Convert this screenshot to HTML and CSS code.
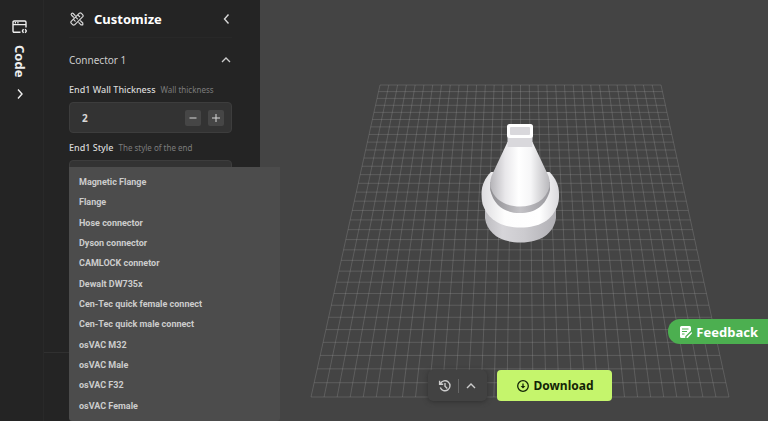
FILE: index.html
```html
<!DOCTYPE html>
<html lang="en">
<head>
<meta charset="utf-8">
<meta name="viewport" content="width=device-width, initial-scale=1">
<title>Customize</title>
<link rel="stylesheet" href="styles.css">
</head>
<body>
<div class="app">
  <nav class="rail">
    <button class="rail-tab" type="button">
      <svg class="icon-code" viewBox="0 0 16 14" fill="none" stroke="currentColor" stroke-width="1.4">
        <path d="M8.500 12.300H2.200Q1 12.300 1 11.100V2.200Q1 1 2.200 1H12.800Q14 1 14 2.200V7.500M1 4.600H14M2.800 2.800H4M5.300 2.800H6.500"/>
        <path d="M11.500 9.200L10.400 11L11.500 12.800M13.200 9.200L14.300 11L13.200 12.800"/>
      </svg>
      <span class="rail-label">Code</span>
      <svg class="chevron" viewBox="0 0 12 12" fill="none" stroke="currentColor" stroke-width="1.4"><path d="M4 1.500L8 6L4 10.500"/></svg>
    </button>
  </nav>

  <aside class="panel">
    <header class="panel-head">
      <svg class="icon-tools" viewBox="0 0 14 14" fill="none" stroke="currentColor" stroke-width="1.2" stroke-linejoin="round" stroke-linecap="round">
        <path d="M1.200 9.400L9.400 1.200Q10.300 .5 11.200 1.200L12.800 2.800Q13.500 3.700 12.800 4.600L4.600 12.800Q3.700 13.500 2.800 12.800L1.200 11.200Q.5 10.300 1.200 9.400ZM8.400 3.500L9.600 4.700M6.200 5.700L7.400 6.900M4 7.900L5.200 9.100"/>
        <path d="M3.600 5.200L1.500 3.200Q.8 2.400 1.500 1.600Q2.400 .9 3.200 1.500L5.200 3.600M10.400 8.800L12.800 11V12.800H11L8.800 10.600"/>
      </svg>
      <h1 class="panel-title">Customize</h1>
      <button class="icon-button" type="button" aria-label="Collapse panel">
        <svg class="chevron" viewBox="0 0 12 12" fill="none" stroke="currentColor" stroke-width="1.4"><path d="M8.500 1.500L4.500 6L8.500 10.500"/></svg>
      </button>
    </header>
    <button class="section-toggle" type="button" aria-expanded="true">
      <span>Connector 1</span>
      <svg class="chevron" viewBox="0 0 12 12" fill="none" stroke="currentColor" stroke-width="1.3"><path d="M2 8L6 4L10 8"/></svg>
    </button>
    <div class="field">
      <div class="field-head"><label for="wall">End1 Wall Thickness</label><span class="hint">Wall thickness</span></div>
      <div class="stepper">
        <input id="wall" class="stepper-value" type="text" inputmode="numeric" value="2">
        <button class="step" type="button" aria-label="Decrease"><svg viewBox="0 0 10 10" stroke="currentColor"><path d="M1.500 5H8.500"/></svg></button>
        <button class="step" type="button" aria-label="Increase"><svg viewBox="0 0 10 10" stroke="currentColor"><path d="M1 5H9M5 1V9"/></svg></button>
      </div>
    </div>
    <div class="field">
      <div class="field-head"><label for="style">End1 Style</label><span class="hint">The style of the end</span></div>
      <div class="select-wrap">
        <select id="style" class="select"></select>
        <ul class="menu" role="listbox" aria-labelledby="style">
          <li class="option" role="option">Magnetic Flange</li>
          <li class="option" role="option">Flange</li>
          <li class="option" role="option">Hose connector</li>
          <li class="option" role="option">Dyson connector</li>
          <li class="option" role="option">CAMLOCK connetor</li>
          <li class="option" role="option">Dewalt DW735x</li>
          <li class="option" role="option">Cen-Tec quick female connect</li>
          <li class="option" role="option">Cen-Tec quick male connect</li>
          <li class="option" role="option">osVAC M32</li>
          <li class="option" role="option">osVAC Male</li>
          <li class="option" role="option">osVAC F32</li>
          <li class="option" role="option">osVAC Female</li>
        </ul>
      </div>
    </div>
    <footer class="panel-foot"></footer>
  </aside>

  <main class="viewer">
    <svg class="scene" viewBox="260 0 508 421" role="img" aria-label="Model preview">
      <defs>
        <linearGradient id="side"><stop offset="0" stop-color="#bdbcc0"/><stop offset=".25" stop-color="#d6d5d9"/><stop offset=".55" stop-color="#cccbcf"/><stop offset="1" stop-color="#b0afb4"/></linearGradient>
        <linearGradient id="ring"><stop offset="0" stop-color="#dddcdf"/><stop offset=".3" stop-color="#fdfdfd"/><stop offset=".75" stop-color="#fff"/><stop offset="1" stop-color="#d9d8dc"/></linearGradient>
        <linearGradient id="cone"><stop offset="0" stop-color="#b4b3b7"/><stop offset=".25" stop-color="#e8e7ea"/><stop offset=".48" stop-color="#fff"/><stop offset=".68" stop-color="#f6f6f7"/><stop offset="1" stop-color="#b8b7bb"/></linearGradient>
        <linearGradient id="band"><stop offset="0" stop-color="#8e8d91"/><stop offset=".5" stop-color="#c4c3c7"/><stop offset="1" stop-color="#99989d"/></linearGradient>
      </defs>
      <path id="grid" class="grid"/>
      <path fill="url(#side)" d="M485 205V218C487 233 500 242.500 520.500 242.500S554 233 556 218V205Z"/>
      <path fill="url(#ring)" d="M481.500 194C481.500 185 485 178 491 172H549.500C555.500 178 559 185 559 194C559 198 559 200 558 204C553 220 540 227.500 520.500 227.500S488 220 482.500 204Q481.500 199 481.500 194Z"/>
      <path fill="url(#band)" d="M490.200 182V190C494 206 505 213 520 213S546 206 550 190V182Z"/>
      <path fill="url(#cone)" d="M507.500 142L491.500 176Q489.500 182 490.500 187C494 200 506 206.500 520 206.500S546 200 549.500 187Q550.500 182 548.500 176L532.500 142Z"/>
      <path fill="#d9d8dc" d="M507.500 136H532.500V147H507.500Z"/>
      <rect x="507" y="124" width="26" height="14" rx="2.500" fill="#fff"/>
      <rect x="510" y="127" width="20" height="8" rx="1" fill="#d9d8dc"/>
    </svg>
    <button class="feedback" type="button">
      <svg class="icon-note" viewBox="0 0 12 14">
        <path fill="currentColor" d="M1.500 1H9.500Q11 1 11 2.500V5.500L5.300 11.200V13H1.500Q0 13 0 11.500V2.500Q0 1 1.500 1ZM11.600 7L12 8.300L7.800 13H6.500V11.800Z"/>
        <path stroke="#4caf50" stroke-width="1.200" d="M2 4H8.500M2 6.500H7M2 9H4.500"/>
      </svg>
      <span>Feedback</span>
    </button>
    <div class="actions">
      <div class="history">
        <button class="icon-button" type="button" aria-label="History">
          <svg class="icon-history" viewBox="0 0 14 14" fill="none" stroke="currentColor" stroke-width="1.400"><path d="M2.500 4.600A5 5 0 1 1 2.300 8.500M1.600 1.800V5.300H5.200M7 4V7.300L9.300 9.400"/></svg>
        </button>
        <span class="divider"></span>
        <button class="icon-button" type="button" aria-label="More">
          <svg class="chevron" viewBox="0 0 12 12" fill="none" stroke="currentColor" stroke-width="1.400"><path d="M2 8L6 4L10 8"/></svg>
        </button>
      </div>
      <button class="download" type="button">
        <svg class="icon-download" viewBox="0 0 14 14" fill="none" stroke="currentColor" stroke-width="1.300"><circle cx="7" cy="7" r="5.300"/><path d="M7 4.500V8"/><path fill="currentColor" stroke="none" d="M4.600 7H9.400L7 9.600Z"/></svg>
        <span>Download</span>
      </button>
    </div>
  </main>
</div>
<script src="grid.js"></script>
</body>
</html>
```
FILE: styles.css
```css
* { box-sizing: border-box; }

body {
  margin: 0;
  background: #444;
  color: #d8d8d8;
  font-family: "Noto Sans", sans-serif;
  font-size: 10px;
}

button, input, select {
  margin: 0;
  padding: 0;
  border: 0;
  background: none;
  color: inherit;
  font: inherit;
}

svg { display: block; }

.app {
  display: flex;
  height: 100vh;
  overflow: hidden;
}

.rail {
  flex: 0 0 44px;
  background: #242424;
  border-right: 1px solid #292929;
}

.rail-tab {
  display: flex;
  flex-direction: column;
  align-items: center;
  gap: 11px;
  width: 100%;
  padding: 20px 4px 0 0;
  color: #eee;
}

.icon-code { width: 16px; height: 14px; }

.rail-label {
  writing-mode: vertical-rl;
  font-size: 13px;
  line-height: 16px;
  font-weight: 700;
}

.chevron { width: 12px; height: 12px; }

.panel {
  display: flex;
  flex-direction: column;
  flex: 0 0 216px;
  min-width: 0;
  padding: 0 28px 0 25px;
  background: #242424;
}

.panel-head {
  display: flex;
  align-items: center;
  height: 38px;
  border-bottom: 1px solid #282828;
}

.icon-tools { width: 14px; height: 14px; margin: 0 10px 0 1px; }

.panel-title {
  flex: 1;
  margin: 0;
  color: #fff;
  font-size: 13px;
  font-weight: 700;
}

.section-toggle {
  display: flex;
  align-items: center;
  justify-content: space-between;
  height: 44px;
  color: #ccc;
}

.field { margin-bottom: 7px; }

.field-head {
  display: flex;
  align-items: center;
  gap: 5px;
  height: 20px;
  padding-bottom: 5px;
  white-space: nowrap;
  font-size: 9px;
  font-weight: 500;
}

.hint { color: #7c7c7c; font-size: 8px; font-weight: 400; }

.stepper {
  display: flex;
  align-items: center;
  gap: 7px;
  height: 31px;
  padding: 0 7px 0 12px;
  border: 1px solid #3d3d3d;
  border-radius: 4px;
  background: #333;
}

.stepper-value {
  flex: 1;
  width: 100%;
  min-width: 0;
  font-size: 10px;
  font-weight: 700;
}

.step {
  display: grid;
  flex: none;
  place-items: center;
  width: 16px;
  height: 16px;
  border-radius: 2px;
  background: #464646;
}

.step svg { width: 10px; height: 10px; }

.select-wrap { position: relative; }

.select {
  display: block;
  width: 100%;
  height: 31px;
  appearance: none;
  border: 1px solid #3d3d3d;
  border-radius: 4px;
  background: #333;
}

.menu {
  position: absolute;
  top: 7px;
  left: 0;
  z-index: 2;
  width: 211px;
  margin: 0;
  padding: 5px 10px;
  list-style: none;
  border-radius: 0 0 3px 3px;
  background: #4c4c4c;
  color: #ccc;
  font-family: Roboto, sans-serif;
  font-size: 9px;
  font-weight: 700;
  white-space: nowrap;
}

.option {
  display: flex;
  align-items: center;
  min-height: 20px;
}

.option:nth-child(3n) { min-height: 21px; }

.panel-foot {
  height: 69px;
  margin: auto -28px 0 -25px;
  border-top: 1px solid #303030;
}

.viewer {
  position: relative;
  display: flex;
  flex: 1;
  min-width: 0;
}

.scene { width: 100%; height: 100%; }

.grid { fill: none; stroke: #a0a0a0; stroke-opacity: .28; }

.feedback {
  position: absolute;
  right: 0;
  bottom: 77px;
  display: flex;
  align-items: center;
  gap: 4px;
  height: 25px;
  padding: 0 10px 0 12px;
  border-radius: 12px 0 0 12px;
  background: #4caf50;
  color: #fff;
  font-size: 13px;
  font-weight: 700;
}

.icon-note { width: 12px; height: 14px; }

.actions {
  position: absolute;
  right: 0;
  bottom: 20px;
  left: 0;
  display: flex;
  justify-content: center;
  gap: 10px;
  padding-left: 12px;
}

.history {
  display: flex;
  align-items: center;
  gap: 6px;
  padding: 0 10px;
  border-radius: 5px;
  background: #424242;
  box-shadow: 0 1px 5px #303030;
  color: #ccc;
}

.divider { width: 1px; height: 14px; background: #666; }

.icon-history, .icon-download { width: 14px; height: 14px; }

.download {
  display: flex;
  align-items: center;
  gap: 4px;
  height: 31px;
  padding: 0 19px;
  border-radius: 4px;
  background: #c5f56c;
  color: #132407;
  font-size: 12px;
  font-weight: 700;
}
```
FILE: grid.js
```js
// Projects a square ground plane of equal cells onto the scene.
const cells = 32;
const far = { y: 85, left: 380, right: 661 };
const near = { y: 397, left: 311, right: 729 };
const farWidth = far.right - far.left;
const nearWidth = near.right - near.left;
const parts = [];

for (let i = 0; i <= cells; i++) {
  const t = i / cells;
  parts.push(`M${far.left + farWidth * t} ${far.y}L${near.left + nearWidth * t} ${near.y}`);

  // Equal depth steps are equal steps in the reciprocal of the row's width.
  const width = 1 / (1 / farWidth + (1 / nearWidth - 1 / farWidth) * t);
  const s = (width - farWidth) / (nearWidth - farWidth);
  const y = far.y + (near.y - far.y) * s;
  parts.push(`M${far.left + (near.left - far.left) * s} ${y}H${far.right + (near.right - far.right) * s}`);
}

document.getElementById("grid").setAttribute("d", parts.join(""));
```
